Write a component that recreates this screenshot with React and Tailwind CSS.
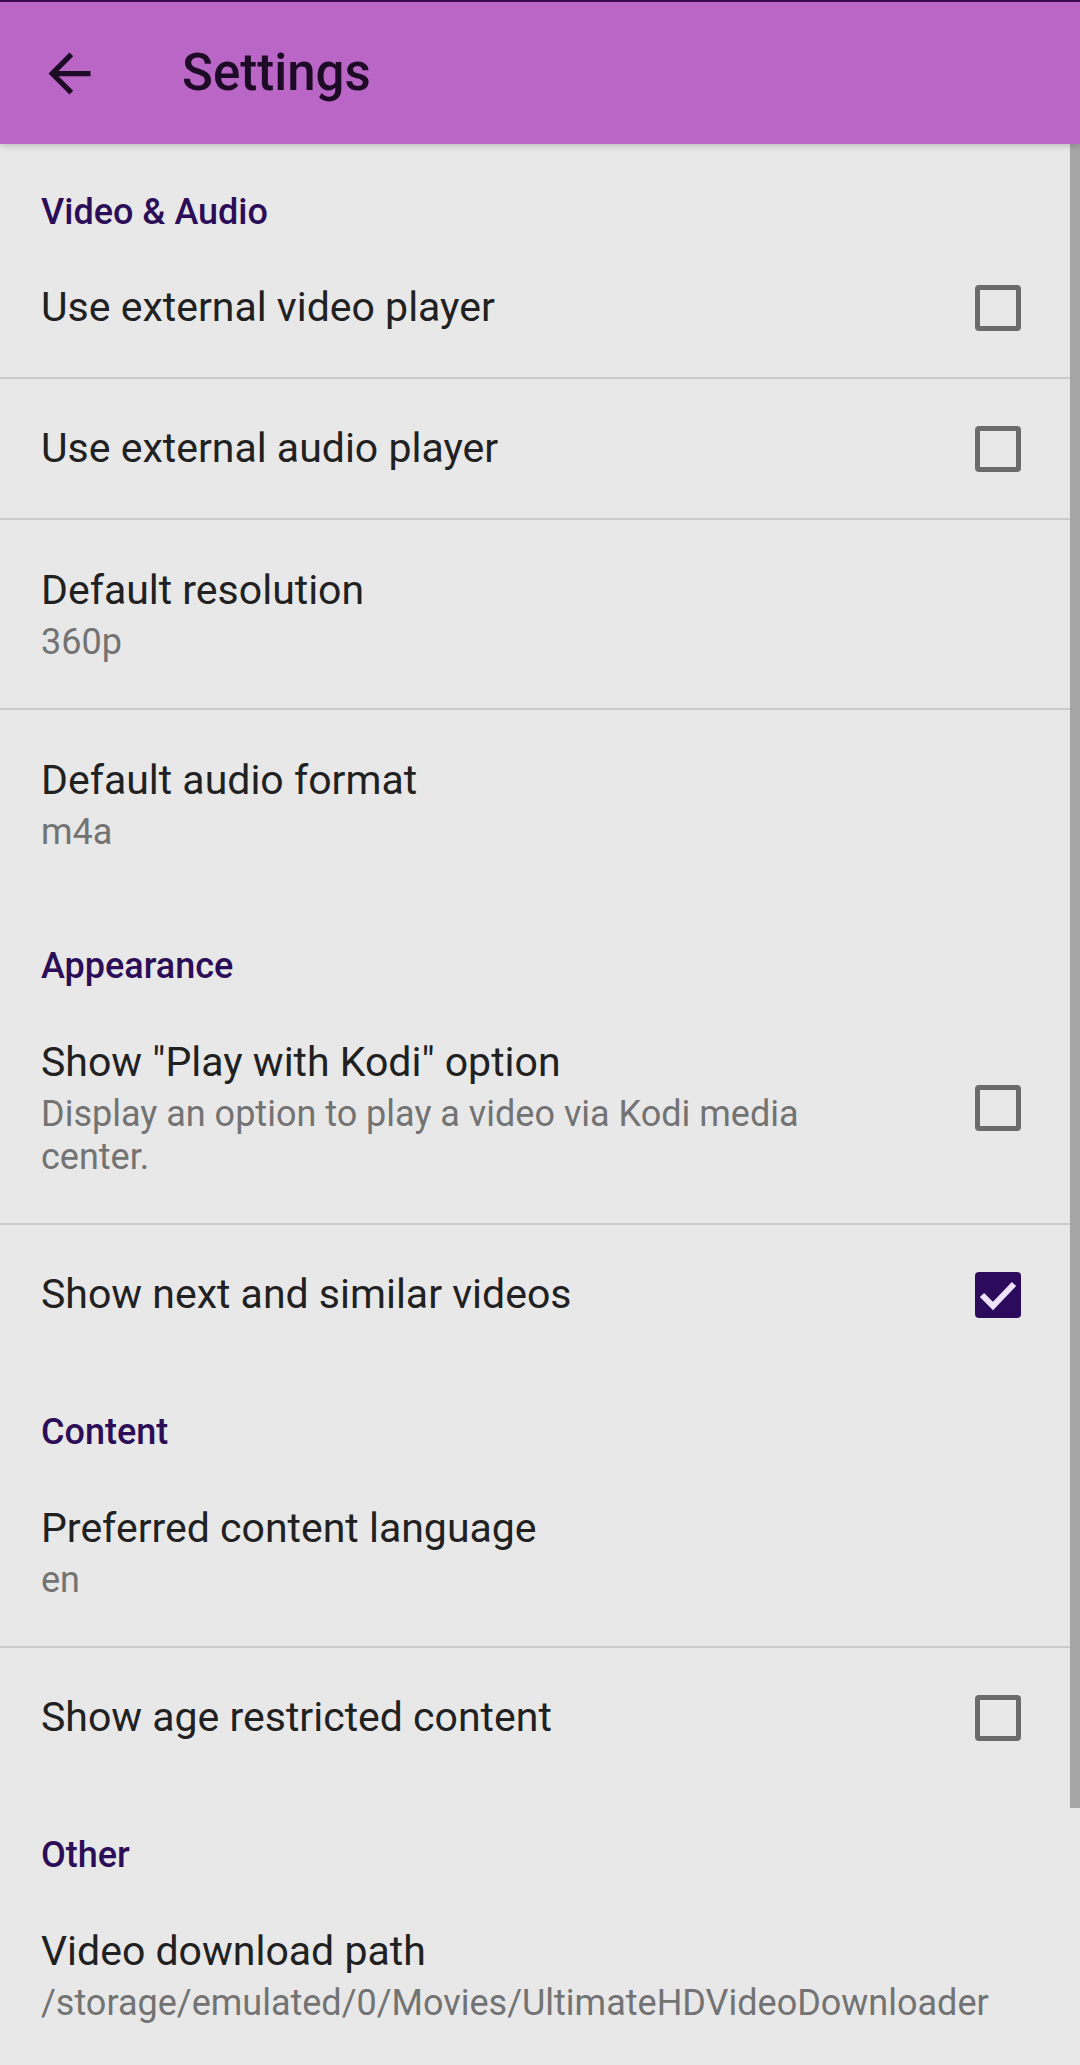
import React from 'react';

function Checkbox({ checked }) {
  if (checked) {
    return (
      <div className="w-[46px] h-[46px] rounded-[4px] bg-[#2c0b5c] flex items-center justify-center shrink-0">
        <svg width="46" height="46" viewBox="0 0 46 46">
          <path d="M7 23 L18 34 L39 12" fill="none" stroke="#efe2fb" strokeWidth="6" />
        </svg>
      </div>
    );
  }
  return <div className="w-[46px] h-[46px] rounded-[4px] border-[5px] border-[#6b6b6b] shrink-0" />;
}

function Category({ children }) {
  return (
    <div className="h-[94px] pt-[46px] pl-[41px]">
      <div className="text-[36px] leading-[44px] font-medium text-[#2c0d58]">{children}</div>
    </div>
  );
}

function Divider() {
  return <div className="h-[2px] bg-[#cbcbcb]" />;
}

function CheckRow({ title, checked }) {
  return (
    <div className="h-[139px] flex items-center justify-between pl-[41px] pr-[59px]">
      <div className="text-[41px] text-[#212121]">{title}</div>
      <Checkbox checked={checked} />
    </div>
  );
}

function ValueRow({ title, summary }) {
  return (
    <div className="flex items-center justify-between pl-[41px] pr-[59px] pt-[44px] pb-[44px]">
      <div>
        <div className="text-[41px] leading-[52px] text-[#212121]">{title}</div>
        <div className="mt-[5px] text-[36px] leading-[43px] text-[#737373] whitespace-nowrap">{summary}</div>
      </div>
    </div>
  );
}

function KodiRow() {
  return (
    <div className="flex items-center justify-between pl-[41px] pr-[59px] pt-[44px] pb-[44px]">
      <div className="w-[850px]">
        <div className="text-[41px] leading-[52px] text-[#212121]">Show "Play with Kodi" option</div>
        <div className="mt-[5px] text-[36px] leading-[43px] text-[#737373]">
          Display an option to play a video via Kodi media center.
        </div>
      </div>
      <Checkbox checked={false} />
    </div>
  );
}

export default function App() {
  return (
    <div className="relative w-[1080px] h-[2065px] overflow-hidden bg-[#e8e8e8] font-['Roboto',sans-serif] flex flex-col">
      <header className="relative z-10 h-[144px] shrink-0 bg-[#b966c7] border-t-[2px] border-[#3a0b55] flex items-center shadow-[0_2px_6px_rgba(0,0,0,0.18)]">
        <div className="w-[63px] h-[63px] ml-[38px] flex items-center justify-center">
          <svg width="63" height="63" viewBox="0 0 24 24" fill="#1d0b26">
            <path d="M20 11H7.83l5.59-5.59L12 4l-8 8 8 8 1.41-1.41L7.83 13H20v-2z" />
          </svg>
        </div>
        <h1 className="ml-[81px] text-[51px] font-medium text-[#1d0b26]">Settings</h1>
      </header>

      <main className="flex flex-col">
        <Category>Video &amp; Audio</Category>
        <CheckRow title="Use external video player" />
        <Divider />
        <CheckRow title="Use external audio player" />
        <Divider />
        <ValueRow title="Default resolution" summary="360p" />
        <Divider />
        <ValueRow title="Default audio format" summary="m4a" />

        <Category>Appearance</Category>
        <KodiRow />
        <Divider />
        <CheckRow title="Show next and similar videos" checked />

        <Category>Content</Category>
        <ValueRow title="Preferred content language" summary="en" />
        <Divider />
        <CheckRow title="Show age restricted content" />

        <Category>Other</Category>
        <ValueRow title="Video download path" summary="/storage/emulated/0/Movies/UltimateHDVideoDownloader" />
      </main>

      <div className="absolute right-0 top-[144px] w-[10px] h-[1664px] bg-[#a6a6a6]" />
    </div>
  );
}
